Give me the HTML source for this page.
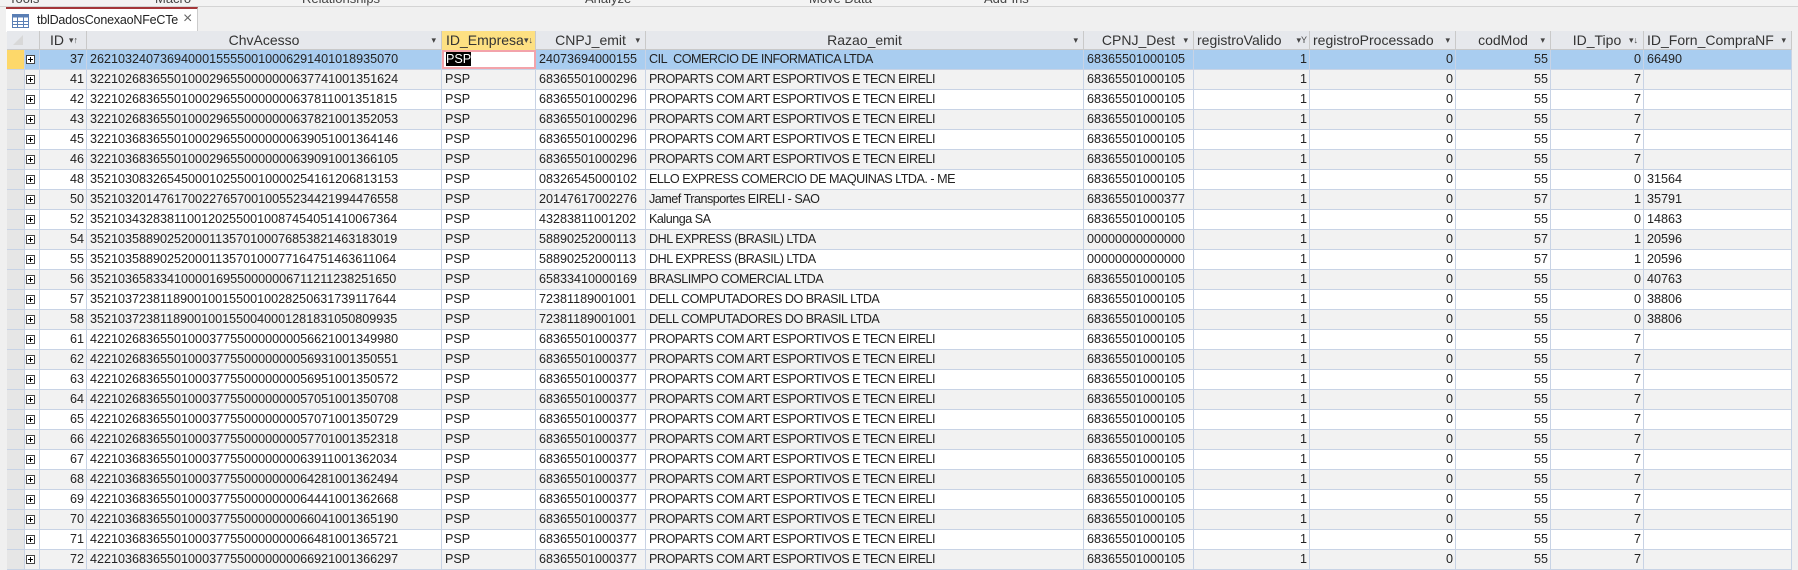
<!DOCTYPE html>
<html><head><meta charset="utf-8">
<style>
*{box-sizing:border-box;margin:0;padding:0}
body{width:1798px;height:568px;overflow:hidden;background:#f0f0f0;font-family:"Liberation Sans",sans-serif;color:#222;position:relative}
.top{position:absolute;left:0;top:0;width:1798px;height:7px;background:#f3f3f3;border-bottom:1px solid #d4d4d4;overflow:hidden}
.top span{position:absolute;top:-9px;font-size:13px;color:#444}
.tab{position:absolute;left:6px;top:7px;width:192px;height:25px;background:#fff;border-top:2px solid #a4373a;border-right:1px solid #ccc;font-size:12.5px}
.tab .t{position:absolute;left:31px;top:4px;color:#222;letter-spacing:-0.2px}
.tab .x{position:absolute;left:177px;top:1px;font-size:16px;color:#666}
.grid{position:absolute;left:7px;top:31px;width:1785px}
.r{display:flex;height:20px;border-bottom:1px solid #c8d3e5}
.c{height:19px;border-right:1px solid #c8d3e5;white-space:nowrap;overflow:hidden;font-size:12.6px;line-height:19px;padding:0 3px;position:relative}
.r:not(.h) .c:nth-child(7){letter-spacing:-0.5px}
.rt{text-align:right;padding-right:2px}
.h{background:#e6e8ec;border-bottom:1px solid #c9c9c9}
.h .c{border-right:1px solid #c9c9c9;text-align:center;font-size:14px;color:#333}
.h .c .a{position:absolute;right:5px;top:0;font-size:9px;color:#444}
.sel{background:#e6e6e6}
.r.g{background:#f2f2f2}
.r.w{background:#fff}
.r.s{background:#a9cdf0}
.pl{display:inline-block;width:9px;height:9px;border:1px solid #444;position:relative;top:1px;left:1px;background:#fff}
.pl:before{content:"";position:absolute;left:1px;top:3px;width:5px;height:1px;background:#000}
.pl:after{content:"";position:absolute;left:3px;top:1px;width:1px;height:5px;background:#000}
</style></head><body>
<div class="top"><span style="left:9px">Tools</span><span style="left:155px">Macro</span><span style="left:302px">Relationships</span><span style="left:585px">Analyze</span><span style="left:809px">Move Data</span><span style="left:984px">Add-Ins</span></div>
<div class="tab">
<svg style="position:absolute;left:6px;top:5px" width="17" height="14"><rect x="0.5" y="0.5" width="16" height="13" fill="#fff" stroke="#5a7fb5"/><rect x="0.5" y="0.5" width="16" height="3" fill="#5a7fb5"/><path d="M0 7.5H17M0 10.5H17M5.5 0V14M11.5 0V14" stroke="#5a7fb5"/></svg>
<span class="t">tblDadosConexaoNFeCTe</span><span class="x">×</span></div>
<div class="grid">
<div class="r h" style="height:19px">
<div class="c" style="width:33px"><svg style="position:absolute;left:5px;top:3px" width="12" height="12"><path d="M11 1L11 11L1 11Z" fill="#d8d8d8"/></svg></div>
<div class="c" style="width:47px;text-align:left;padding-left:10px">ID<span class="a" style="right:8px">▾↑</span></div>
<div class="c" style="width:355px">ChvAcesso<span class="a">▾</span></div>
<div class="c" style="width:94px;background:#fde082;text-align:left;padding-left:4px">ID_Empresa<span class="a" style="right:2px">▾↓</span></div>
<div class="c" style="width:110px">CNPJ_emit<span class="a">▾</span></div>
<div class="c" style="width:438px">Razao_emit<span class="a">▾</span></div>
<div class="c" style="width:110px">CPNJ_Dest<span class="a">▾</span></div>
<div class="c" style="width:116px;text-align:left;padding-left:3px">registroValido<span class="a" style="right:2px">▾Y</span></div>
<div class="c" style="width:146px;text-align:left;padding-left:3px">registroProcessado<span class="a">▾</span></div>
<div class="c" style="width:95px">codMod<span class="a">▾</span></div>
<div class="c" style="width:93px">ID_Tipo<span class="a">▾↓</span></div>
<div class="c" style="width:148px;text-align:left;padding-left:3px">ID_Forn_CompraNF<span class="a">▾</span></div>
</div>

<div class="r s"><div class="c" style="width:18px;background:#fdd86a"></div><div class="c" style="width:15px;padding:0"><span class="pl"></span></div><div class="c rt" style="width:47px">37</div><div class="c" style="width:355px">26210324073694000155550010006291401018935070</div><div class="c" style="width:94px;background:#fff;border:2px solid #f3a3aa;line-height:15px;padding-left:2px"><span style="background:#000;color:#fff">PSP</span></div><div class="c" style="width:110px">24073694000155</div><div class="c" style="width:438px">CIL&nbsp;&nbsp;COMERCIO DE INFORMATICA LTDA</div><div class="c" style="width:110px">68365501000105</div><div class="c rt" style="width:116px">1</div><div class="c rt" style="width:146px">0</div><div class="c rt" style="width:95px">55</div><div class="c rt" style="width:93px">0</div><div class="c" style="width:148px">66490</div></div>

<div class="r g"><div class="c sel" style="width:18px"></div><div class="c" style="width:15px;padding:0"><span class="pl"></span></div><div class="c rt" style="width:47px">41</div><div class="c" style="width:355px">32210268365501000296550000000637741001351624</div><div class="c" style="width:94px">PSP</div><div class="c" style="width:110px">68365501000296</div><div class="c" style="width:438px">PROPARTS COM ART ESPORTIVOS E TECN EIRELI</div><div class="c" style="width:110px">68365501000105</div><div class="c rt" style="width:116px">1</div><div class="c rt" style="width:146px">0</div><div class="c rt" style="width:95px">55</div><div class="c rt" style="width:93px">7</div><div class="c" style="width:148px"></div></div>

<div class="r w"><div class="c sel" style="width:18px"></div><div class="c" style="width:15px;padding:0"><span class="pl"></span></div><div class="c rt" style="width:47px">42</div><div class="c" style="width:355px">32210268365501000296550000000637811001351815</div><div class="c" style="width:94px">PSP</div><div class="c" style="width:110px">68365501000296</div><div class="c" style="width:438px">PROPARTS COM ART ESPORTIVOS E TECN EIRELI</div><div class="c" style="width:110px">68365501000105</div><div class="c rt" style="width:116px">1</div><div class="c rt" style="width:146px">0</div><div class="c rt" style="width:95px">55</div><div class="c rt" style="width:93px">7</div><div class="c" style="width:148px"></div></div>

<div class="r g"><div class="c sel" style="width:18px"></div><div class="c" style="width:15px;padding:0"><span class="pl"></span></div><div class="c rt" style="width:47px">43</div><div class="c" style="width:355px">32210268365501000296550000000637821001352053</div><div class="c" style="width:94px">PSP</div><div class="c" style="width:110px">68365501000296</div><div class="c" style="width:438px">PROPARTS COM ART ESPORTIVOS E TECN EIRELI</div><div class="c" style="width:110px">68365501000105</div><div class="c rt" style="width:116px">1</div><div class="c rt" style="width:146px">0</div><div class="c rt" style="width:95px">55</div><div class="c rt" style="width:93px">7</div><div class="c" style="width:148px"></div></div>

<div class="r w"><div class="c sel" style="width:18px"></div><div class="c" style="width:15px;padding:0"><span class="pl"></span></div><div class="c rt" style="width:47px">45</div><div class="c" style="width:355px">32210368365501000296550000000639051001364146</div><div class="c" style="width:94px">PSP</div><div class="c" style="width:110px">68365501000296</div><div class="c" style="width:438px">PROPARTS COM ART ESPORTIVOS E TECN EIRELI</div><div class="c" style="width:110px">68365501000105</div><div class="c rt" style="width:116px">1</div><div class="c rt" style="width:146px">0</div><div class="c rt" style="width:95px">55</div><div class="c rt" style="width:93px">7</div><div class="c" style="width:148px"></div></div>

<div class="r g"><div class="c sel" style="width:18px"></div><div class="c" style="width:15px;padding:0"><span class="pl"></span></div><div class="c rt" style="width:47px">46</div><div class="c" style="width:355px">32210368365501000296550000000639091001366105</div><div class="c" style="width:94px">PSP</div><div class="c" style="width:110px">68365501000296</div><div class="c" style="width:438px">PROPARTS COM ART ESPORTIVOS E TECN EIRELI</div><div class="c" style="width:110px">68365501000105</div><div class="c rt" style="width:116px">1</div><div class="c rt" style="width:146px">0</div><div class="c rt" style="width:95px">55</div><div class="c rt" style="width:93px">7</div><div class="c" style="width:148px"></div></div>

<div class="r w"><div class="c sel" style="width:18px"></div><div class="c" style="width:15px;padding:0"><span class="pl"></span></div><div class="c rt" style="width:47px">48</div><div class="c" style="width:355px">35210308326545000102550010000254161206813153</div><div class="c" style="width:94px">PSP</div><div class="c" style="width:110px">08326545000102</div><div class="c" style="width:438px">ELLO EXPRESS COMERCIO DE MAQUINAS LTDA. - ME</div><div class="c" style="width:110px">68365501000105</div><div class="c rt" style="width:116px">1</div><div class="c rt" style="width:146px">0</div><div class="c rt" style="width:95px">55</div><div class="c rt" style="width:93px">0</div><div class="c" style="width:148px">31564</div></div>

<div class="r g"><div class="c sel" style="width:18px"></div><div class="c" style="width:15px;padding:0"><span class="pl"></span></div><div class="c rt" style="width:47px">50</div><div class="c" style="width:355px">35210320147617002276570010055234421994476558</div><div class="c" style="width:94px">PSP</div><div class="c" style="width:110px">20147617002276</div><div class="c" style="width:438px">Jamef Transportes EIRELI - SAO</div><div class="c" style="width:110px">68365501000377</div><div class="c rt" style="width:116px">1</div><div class="c rt" style="width:146px">0</div><div class="c rt" style="width:95px">57</div><div class="c rt" style="width:93px">1</div><div class="c" style="width:148px">35791</div></div>

<div class="r w"><div class="c sel" style="width:18px"></div><div class="c" style="width:15px;padding:0"><span class="pl"></span></div><div class="c rt" style="width:47px">52</div><div class="c" style="width:355px">35210343283811001202550010087454051410067364</div><div class="c" style="width:94px">PSP</div><div class="c" style="width:110px">43283811001202</div><div class="c" style="width:438px">Kalunga SA</div><div class="c" style="width:110px">68365501000105</div><div class="c rt" style="width:116px">1</div><div class="c rt" style="width:146px">0</div><div class="c rt" style="width:95px">55</div><div class="c rt" style="width:93px">0</div><div class="c" style="width:148px">14863</div></div>

<div class="r g"><div class="c sel" style="width:18px"></div><div class="c" style="width:15px;padding:0"><span class="pl"></span></div><div class="c rt" style="width:47px">54</div><div class="c" style="width:355px">35210358890252000113570100076853821463183019</div><div class="c" style="width:94px">PSP</div><div class="c" style="width:110px">58890252000113</div><div class="c" style="width:438px">DHL EXPRESS (BRASIL) LTDA</div><div class="c" style="width:110px">00000000000000</div><div class="c rt" style="width:116px">1</div><div class="c rt" style="width:146px">0</div><div class="c rt" style="width:95px">57</div><div class="c rt" style="width:93px">1</div><div class="c" style="width:148px">20596</div></div>

<div class="r w"><div class="c sel" style="width:18px"></div><div class="c" style="width:15px;padding:0"><span class="pl"></span></div><div class="c rt" style="width:47px">55</div><div class="c" style="width:355px">35210358890252000113570100077164751463611064</div><div class="c" style="width:94px">PSP</div><div class="c" style="width:110px">58890252000113</div><div class="c" style="width:438px">DHL EXPRESS (BRASIL) LTDA</div><div class="c" style="width:110px">00000000000000</div><div class="c rt" style="width:116px">1</div><div class="c rt" style="width:146px">0</div><div class="c rt" style="width:95px">57</div><div class="c rt" style="width:93px">1</div><div class="c" style="width:148px">20596</div></div>

<div class="r g"><div class="c sel" style="width:18px"></div><div class="c" style="width:15px;padding:0"><span class="pl"></span></div><div class="c rt" style="width:47px">56</div><div class="c" style="width:355px">35210365833410000169550000006711211238251650</div><div class="c" style="width:94px">PSP</div><div class="c" style="width:110px">65833410000169</div><div class="c" style="width:438px">BRASLIMPO COMERCIAL LTDA</div><div class="c" style="width:110px">68365501000105</div><div class="c rt" style="width:116px">1</div><div class="c rt" style="width:146px">0</div><div class="c rt" style="width:95px">55</div><div class="c rt" style="width:93px">0</div><div class="c" style="width:148px">40763</div></div>

<div class="r w"><div class="c sel" style="width:18px"></div><div class="c" style="width:15px;padding:0"><span class="pl"></span></div><div class="c rt" style="width:47px">57</div><div class="c" style="width:355px">35210372381189001001550010028250631739117644</div><div class="c" style="width:94px">PSP</div><div class="c" style="width:110px">72381189001001</div><div class="c" style="width:438px">DELL COMPUTADORES DO BRASIL LTDA</div><div class="c" style="width:110px">68365501000105</div><div class="c rt" style="width:116px">1</div><div class="c rt" style="width:146px">0</div><div class="c rt" style="width:95px">55</div><div class="c rt" style="width:93px">0</div><div class="c" style="width:148px">38806</div></div>

<div class="r g"><div class="c sel" style="width:18px"></div><div class="c" style="width:15px;padding:0"><span class="pl"></span></div><div class="c rt" style="width:47px">58</div><div class="c" style="width:355px">35210372381189001001550040001281831050809935</div><div class="c" style="width:94px">PSP</div><div class="c" style="width:110px">72381189001001</div><div class="c" style="width:438px">DELL COMPUTADORES DO BRASIL LTDA</div><div class="c" style="width:110px">68365501000105</div><div class="c rt" style="width:116px">1</div><div class="c rt" style="width:146px">0</div><div class="c rt" style="width:95px">55</div><div class="c rt" style="width:93px">0</div><div class="c" style="width:148px">38806</div></div>

<div class="r w"><div class="c sel" style="width:18px"></div><div class="c" style="width:15px;padding:0"><span class="pl"></span></div><div class="c rt" style="width:47px">61</div><div class="c" style="width:355px">42210268365501000377550000000056621001349980</div><div class="c" style="width:94px">PSP</div><div class="c" style="width:110px">68365501000377</div><div class="c" style="width:438px">PROPARTS COM ART ESPORTIVOS E TECN EIRELI</div><div class="c" style="width:110px">68365501000105</div><div class="c rt" style="width:116px">1</div><div class="c rt" style="width:146px">0</div><div class="c rt" style="width:95px">55</div><div class="c rt" style="width:93px">7</div><div class="c" style="width:148px"></div></div>

<div class="r g"><div class="c sel" style="width:18px"></div><div class="c" style="width:15px;padding:0"><span class="pl"></span></div><div class="c rt" style="width:47px">62</div><div class="c" style="width:355px">42210268365501000377550000000056931001350551</div><div class="c" style="width:94px">PSP</div><div class="c" style="width:110px">68365501000377</div><div class="c" style="width:438px">PROPARTS COM ART ESPORTIVOS E TECN EIRELI</div><div class="c" style="width:110px">68365501000105</div><div class="c rt" style="width:116px">1</div><div class="c rt" style="width:146px">0</div><div class="c rt" style="width:95px">55</div><div class="c rt" style="width:93px">7</div><div class="c" style="width:148px"></div></div>

<div class="r w"><div class="c sel" style="width:18px"></div><div class="c" style="width:15px;padding:0"><span class="pl"></span></div><div class="c rt" style="width:47px">63</div><div class="c" style="width:355px">42210268365501000377550000000056951001350572</div><div class="c" style="width:94px">PSP</div><div class="c" style="width:110px">68365501000377</div><div class="c" style="width:438px">PROPARTS COM ART ESPORTIVOS E TECN EIRELI</div><div class="c" style="width:110px">68365501000105</div><div class="c rt" style="width:116px">1</div><div class="c rt" style="width:146px">0</div><div class="c rt" style="width:95px">55</div><div class="c rt" style="width:93px">7</div><div class="c" style="width:148px"></div></div>

<div class="r g"><div class="c sel" style="width:18px"></div><div class="c" style="width:15px;padding:0"><span class="pl"></span></div><div class="c rt" style="width:47px">64</div><div class="c" style="width:355px">42210268365501000377550000000057051001350708</div><div class="c" style="width:94px">PSP</div><div class="c" style="width:110px">68365501000377</div><div class="c" style="width:438px">PROPARTS COM ART ESPORTIVOS E TECN EIRELI</div><div class="c" style="width:110px">68365501000105</div><div class="c rt" style="width:116px">1</div><div class="c rt" style="width:146px">0</div><div class="c rt" style="width:95px">55</div><div class="c rt" style="width:93px">7</div><div class="c" style="width:148px"></div></div>

<div class="r w"><div class="c sel" style="width:18px"></div><div class="c" style="width:15px;padding:0"><span class="pl"></span></div><div class="c rt" style="width:47px">65</div><div class="c" style="width:355px">42210268365501000377550000000057071001350729</div><div class="c" style="width:94px">PSP</div><div class="c" style="width:110px">68365501000377</div><div class="c" style="width:438px">PROPARTS COM ART ESPORTIVOS E TECN EIRELI</div><div class="c" style="width:110px">68365501000105</div><div class="c rt" style="width:116px">1</div><div class="c rt" style="width:146px">0</div><div class="c rt" style="width:95px">55</div><div class="c rt" style="width:93px">7</div><div class="c" style="width:148px"></div></div>

<div class="r g"><div class="c sel" style="width:18px"></div><div class="c" style="width:15px;padding:0"><span class="pl"></span></div><div class="c rt" style="width:47px">66</div><div class="c" style="width:355px">42210268365501000377550000000057701001352318</div><div class="c" style="width:94px">PSP</div><div class="c" style="width:110px">68365501000377</div><div class="c" style="width:438px">PROPARTS COM ART ESPORTIVOS E TECN EIRELI</div><div class="c" style="width:110px">68365501000105</div><div class="c rt" style="width:116px">1</div><div class="c rt" style="width:146px">0</div><div class="c rt" style="width:95px">55</div><div class="c rt" style="width:93px">7</div><div class="c" style="width:148px"></div></div>

<div class="r w"><div class="c sel" style="width:18px"></div><div class="c" style="width:15px;padding:0"><span class="pl"></span></div><div class="c rt" style="width:47px">67</div><div class="c" style="width:355px">42210368365501000377550000000063911001362034</div><div class="c" style="width:94px">PSP</div><div class="c" style="width:110px">68365501000377</div><div class="c" style="width:438px">PROPARTS COM ART ESPORTIVOS E TECN EIRELI</div><div class="c" style="width:110px">68365501000105</div><div class="c rt" style="width:116px">1</div><div class="c rt" style="width:146px">0</div><div class="c rt" style="width:95px">55</div><div class="c rt" style="width:93px">7</div><div class="c" style="width:148px"></div></div>

<div class="r g"><div class="c sel" style="width:18px"></div><div class="c" style="width:15px;padding:0"><span class="pl"></span></div><div class="c rt" style="width:47px">68</div><div class="c" style="width:355px">42210368365501000377550000000064281001362494</div><div class="c" style="width:94px">PSP</div><div class="c" style="width:110px">68365501000377</div><div class="c" style="width:438px">PROPARTS COM ART ESPORTIVOS E TECN EIRELI</div><div class="c" style="width:110px">68365501000105</div><div class="c rt" style="width:116px">1</div><div class="c rt" style="width:146px">0</div><div class="c rt" style="width:95px">55</div><div class="c rt" style="width:93px">7</div><div class="c" style="width:148px"></div></div>

<div class="r w"><div class="c sel" style="width:18px"></div><div class="c" style="width:15px;padding:0"><span class="pl"></span></div><div class="c rt" style="width:47px">69</div><div class="c" style="width:355px">42210368365501000377550000000064441001362668</div><div class="c" style="width:94px">PSP</div><div class="c" style="width:110px">68365501000377</div><div class="c" style="width:438px">PROPARTS COM ART ESPORTIVOS E TECN EIRELI</div><div class="c" style="width:110px">68365501000105</div><div class="c rt" style="width:116px">1</div><div class="c rt" style="width:146px">0</div><div class="c rt" style="width:95px">55</div><div class="c rt" style="width:93px">7</div><div class="c" style="width:148px"></div></div>

<div class="r g"><div class="c sel" style="width:18px"></div><div class="c" style="width:15px;padding:0"><span class="pl"></span></div><div class="c rt" style="width:47px">70</div><div class="c" style="width:355px">42210368365501000377550000000066041001365190</div><div class="c" style="width:94px">PSP</div><div class="c" style="width:110px">68365501000377</div><div class="c" style="width:438px">PROPARTS COM ART ESPORTIVOS E TECN EIRELI</div><div class="c" style="width:110px">68365501000105</div><div class="c rt" style="width:116px">1</div><div class="c rt" style="width:146px">0</div><div class="c rt" style="width:95px">55</div><div class="c rt" style="width:93px">7</div><div class="c" style="width:148px"></div></div>

<div class="r w"><div class="c sel" style="width:18px"></div><div class="c" style="width:15px;padding:0"><span class="pl"></span></div><div class="c rt" style="width:47px">71</div><div class="c" style="width:355px">42210368365501000377550000000066481001365721</div><div class="c" style="width:94px">PSP</div><div class="c" style="width:110px">68365501000377</div><div class="c" style="width:438px">PROPARTS COM ART ESPORTIVOS E TECN EIRELI</div><div class="c" style="width:110px">68365501000105</div><div class="c rt" style="width:116px">1</div><div class="c rt" style="width:146px">0</div><div class="c rt" style="width:95px">55</div><div class="c rt" style="width:93px">7</div><div class="c" style="width:148px"></div></div>

<div class="r g"><div class="c sel" style="width:18px"></div><div class="c" style="width:15px;padding:0"><span class="pl"></span></div><div class="c rt" style="width:47px">72</div><div class="c" style="width:355px">42210368365501000377550000000066921001366297</div><div class="c" style="width:94px">PSP</div><div class="c" style="width:110px">68365501000377</div><div class="c" style="width:438px">PROPARTS COM ART ESPORTIVOS E TECN EIRELI</div><div class="c" style="width:110px">68365501000105</div><div class="c rt" style="width:116px">1</div><div class="c rt" style="width:146px">0</div><div class="c rt" style="width:95px">55</div><div class="c rt" style="width:93px">7</div><div class="c" style="width:148px"></div></div>
</div>
</body></html>
